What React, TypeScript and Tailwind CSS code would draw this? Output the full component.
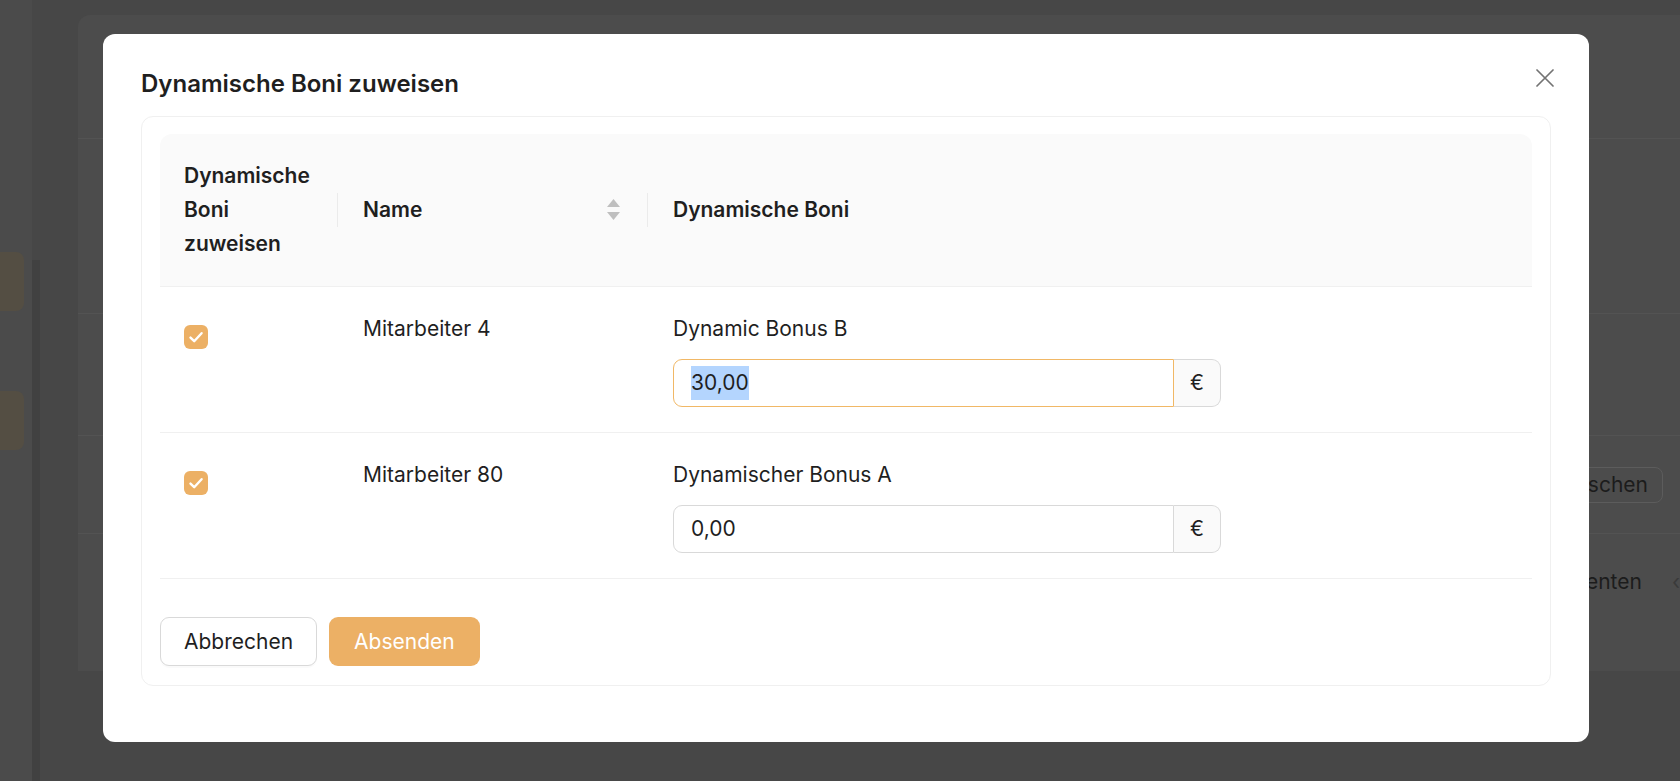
import { Fragment } from 'react';

type Row = {
  name: string;
  bonus: string;
  value: string;
  focused?: boolean;
};

const rows: Row[] = [
  { name: 'Mitarbeiter 4', bonus: 'Dynamic Bonus B', value: '30,00', focused: true },
  { name: 'Mitarbeiter 80', bonus: 'Dynamischer Bonus A', value: '0,00' },
];

function CheckBox() {
  return (
    <span className="mt-[13px] flex h-[24px] w-[24px] items-center justify-center rounded-[6px] bg-[#ecb065]">
      <svg width="24" height="24" viewBox="0 0 24 24">
        <path d="M6.5 12.6 10.2 16.2 17.6 8.2" fill="none" stroke="white" strokeWidth="2.4" strokeLinecap="round" strokeLinejoin="round" />
      </svg>
    </span>
  );
}

function SortIcon() {
  return (
    <svg width="13" height="22" viewBox="0 0 13 22">
      <path d="M6.5 0 13 8H0Z" fill="#bfbfbf" />
      <path d="M0 13h13l-6.5 8Z" fill="#bfbfbf" />
    </svg>
  );
}

function AmountInput({ value, focused }: { value: string; focused?: boolean }) {
  return (
    <div className="mt-[13px] flex h-[48px] w-[548px]">
      <div
        className={`flex flex-1 items-center rounded-l-[9px] border pl-[17px] ${
          focused ? 'border-[#f1b866]' : 'border-[#d9d9d9]'
        }`}
      >
        {focused ? (
          <span className="bg-[#b4d5fe] leading-[34px]">{value}</span>
        ) : (
          <span className="leading-[34px]">{value}</span>
        )}
      </div>
      <div className="flex w-[47px] items-center justify-center rounded-r-[9px] border border-l-0 border-[#d9d9d9] bg-[#fafafa]">
        €
      </div>
    </div>
  );
}

export default function App() {
  return (
    <div className="relative h-[781px] w-[1680px] overflow-hidden bg-[#474747] font-['Inter','Liberation_Sans',sans-serif] text-[21px] text-[#1f1f1f]">
      {/* Dimmed page behind the modal */}
      <div className="flex h-full">
        <div className="flex w-[32px] flex-col bg-[#4b4b4b] pt-[252px]">
          <div className="h-[59px] w-[24px] rounded-r-[8px] bg-[#544e43]" />
          <div className="mt-[80px] h-[59px] w-[24px] rounded-r-[8px] bg-[#544e43]" />
        </div>
        <div className="flex w-[46px] flex-col">
          <div className="mt-[260px] h-full w-[8px] bg-[#414141]" />
        </div>
        <div className="flex-1 pt-[15px]">
          <div className="flex h-[656px] flex-col rounded-tl-[12px] bg-[#4c4c4c] text-[#1c1c1c]">
            <div className="h-[124px] border-b border-[#535353]" />
            <div className="h-[175px] border-b border-[#535353]" />
            <div className="h-[122px] border-b border-[#535353]" />
            <div className="flex h-[98px] items-center justify-end border-b border-[#535353] pr-[17px]">
              <div className="flex h-[36px] items-center rounded-[8px] border border-[#5c5c5c] px-[14px]">Löschen</div>
            </div>
            <div className="flex h-[96px] items-center justify-end gap-[30px]">
              <span>2 Elementen</span>
              <span className="text-[#3a3a3a]">‹</span>
            </div>
          </div>
        </div>
      </div>

      {/* Modal */}
      <div className="absolute left-[103px] top-[34px] w-[1486px] rounded-[12px] bg-white px-[38px] pb-[56px] pt-[32px]">
        <button className="absolute right-[35px] top-[35px] h-[18px] w-[18px]">
          <svg width="18" height="18" viewBox="0 0 18 18">
            <path d="M1 1 17 17M17 1 1 17" stroke="#737373" strokeWidth="1.7" strokeLinecap="round" />
          </svg>
        </button>

        <h2 className="mb-[14px] text-[24px] font-semibold leading-[36px]">Dynamische Boni zuweisen</h2>

        <div className="rounded-[12px] border border-[#f0f0f0] px-[18px] pb-[19px] pt-[17px]">
          {/* Table */}
          <div className="grid grid-cols-[178px_310px_1fr]">
            <div className="relative rounded-tl-[12px] border-b border-[#f0f0f0] bg-[#fafafa] px-[24px] py-[25px] font-semibold leading-[34px]">
              <div className="whitespace-nowrap">Dynamische</div>
              <div>Boni</div>
              <div>zuweisen</div>
              <span className="absolute right-0 top-1/2 h-[34px] w-px -translate-y-1/2 bg-[#ebebeb]" />
            </div>
            <div className="relative flex items-center justify-between border-b border-[#f0f0f0] bg-[#fafafa] pl-[25px] pr-[28px] font-semibold leading-[34px]">
              <span>Name</span>
              <SortIcon />
              <span className="absolute right-0 top-1/2 h-[34px] w-px -translate-y-1/2 bg-[#ebebeb]" />
            </div>
            <div className="flex items-center rounded-tr-[12px] border-b border-[#f0f0f0] bg-[#fafafa] pl-[25px] font-semibold leading-[34px]">
              Dynamische Boni
            </div>

            {rows.map((row) => (
              <Fragment key={row.name}>
                <div className="border-b border-[#f0f0f0] px-[24px] py-[25px]">
                  <CheckBox />
                </div>
                <div className="border-b border-[#f0f0f0] pl-[25px] pr-[24px] py-[25px] leading-[34px]">{row.name}</div>
                <div className="border-b border-[#f0f0f0] pl-[25px] pr-[24px] py-[25px]">
                  <div className="leading-[34px]">{row.bonus}</div>
                  <AmountInput value={row.value} focused={row.focused} />
                </div>
              </Fragment>
            ))}
          </div>

          {/* Actions */}
          <div className="mt-[38px] flex gap-[12px]">
            <button className="h-[49px] rounded-[9px] border border-[#d9d9d9] bg-white px-[23px] shadow-[0_2px_0_rgba(0,0,0,0.02)]">
              Abbrechen
            </button>
            <button className="h-[49px] rounded-[9px] bg-[#ecb065] px-[25px] text-white">Absenden</button>
          </div>
        </div>
      </div>
    </div>
  );
}
